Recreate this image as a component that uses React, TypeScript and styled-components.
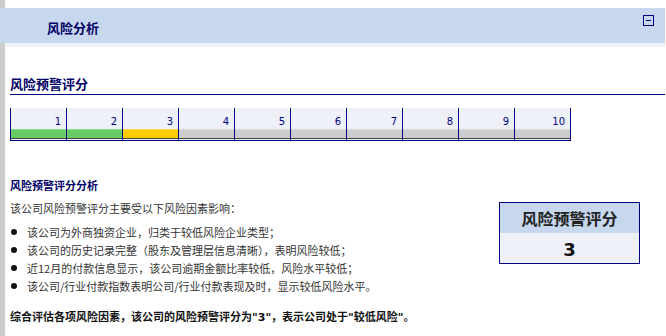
import React from 'react';
import styled, { createGlobalStyle } from 'styled-components';

const GlobalStyle = createGlobalStyle`
  body {
    margin: 0;
    background: linear-gradient(to right, #cccccc 0, #cccccc 5px, #ffffff 5px);
    font-family: "Noto Sans CJK SC", "DejaVu Sans", sans-serif;
    color: #333;
  }
`;

const Page = styled.div`
  padding-top: 8px;
  padding-bottom: 8px;
`;

const PanelHeader = styled.div`
  height: 35px;
  margin-right: 1px;
  background: #c6d7ee;
  display: flex;
  align-items: center;
  justify-content: space-between;
  padding: 0 11px 0 47px;
`;

const PanelTitle = styled.h2`
  margin: 0;
  font-size: 13px;
  font-weight: bold;
  color: #000066;
  padding-top: 4px;
`;

const CollapseButton = styled.button`
  align-self: flex-start;
  margin-top: 7px;
  width: 11px;
  height: 11px;
  padding: 0;
  border: 1px solid #000080;
  background: transparent;
  display: flex;
  align-items: center;
  justify-content: center;
  cursor: pointer;

  span {
    display: block;
    width: 5px;
    height: 1px;
    background: #000080;
  }
`;

const Strip = styled.div`
  height: 4px;
  margin: 0 1px 0 5px;
  background: #f1f2f5;
`;

const Body = styled.div`
  padding: 0 1px 0 10px;
`;

const SectionTitle = styled.h3`
  margin: 29px 0 0;
  font-size: 13px;
  line-height: 16px;
  font-weight: bold;
  color: #000066;
  padding-bottom: 2px;
  border-bottom: 1px solid #000080;
`;

const Scale = styled.div`
  margin-top: 13px;
  display: grid;
  grid-template-columns: repeat(10, 56px);
  width: 560px;
  border-right: 1px solid #000080;
  border-bottom: 1px solid #000080;
`;

const ScaleCell = styled.div`
  border-left: 1px solid #000080;
  background: #eef1f7;
  padding-bottom: 1px;
`;

const ScaleNumber = styled.div`
  height: 21px;
  box-sizing: border-box;
  padding: 8px 5px 0 0;
  text-align: right;
  font-family: "DejaVu Sans", sans-serif;
  font-size: 10px;
  line-height: 12px;
  color: #000080;
`;

const ScaleBar = styled.div<{ $color: string }>`
  height: 10px;
  box-sizing: border-box;
  background: ${(p) => p.$color};
  border-top: 1px solid rgba(255, 255, 255, 0.25);
  border-bottom: 1px solid #444;
`;

const AnalysisTitle = styled.h4`
  margin: 36px 0 0;
  font-size: 11px;
  line-height: 16px;
  font-weight: bold;
  color: #000066;
`;

const AnalysisRow = styled.div`
  display: flex;
  justify-content: space-between;
  align-items: flex-start;
  margin-top: 6px;
`;

const Paragraph = styled.p`
  margin: 0;
  font-size: 11px;
  line-height: 18px;
  color: #333;
`;

const FactorList = styled.ul`
  list-style: none;
  margin: 6px 0 0;
  padding: 0;

  li {
    display: flex;
    align-items: center;
    font-size: 11px;
    line-height: 18px;
    color: #333;
  }

  li::before {
    content: "";
    flex: none;
    width: 6px;
    height: 6px;
    border-radius: 50%;
    background: #111;
    margin: 0 10px 0 1px;
  }
`;

const ScoreBox = styled.div`
  margin: 3px 25px 0 0;
  width: 139px;
  border: 1px solid #000080;
  text-align: center;
`;

const ScoreHead = styled.div`
  height: 30px;
  background: #c6d7ee;
  font-size: 16px;
  font-weight: bold;
  line-height: 30px;
  color: #222;
`;

const ScoreValue = styled.div`
  height: 30px;
  background: #eef1f7;
  font-family: "DejaVu Sans", sans-serif;
  font-size: 18px;
  font-weight: bold;
  line-height: 34px;
  color: #111;
`;

const Conclusion = styled.p`
  margin: 14px 0 0;
  font-family: "DejaVu Sans", "Noto Sans CJK SC", sans-serif;
  font-size: 11px;
  line-height: 18px;
  font-weight: bold;
  color: #111;
`;

const levels = [1, 2, 3, 4, 5, 6, 7, 8, 9, 10];
const score = 3;

const barColor = (n: number) => {
  if (n > score) return '#cccccc';
  if (n === score) return '#ffcc00';
  return '#66cc66';
};

const factors = [
  '该公司为外商独资企业，归类于较低风险企业类型；',
  '该公司的历史记录完整（股东及管理层信息清晰），表明风险较低；',
  '近12月的付款信息显示，该公司逾期金额比率较低，风险水平较低；',
  '该公司/行业付款指数表明公司/行业付款表现及时，显示较低风险水平。',
];

const App: React.FC = () => {
  return (
    <Page lang="zh-CN">
      <GlobalStyle />
      <PanelHeader>
        <PanelTitle>风险分析</PanelTitle>
        <CollapseButton aria-label="collapse">
          <span />
        </CollapseButton>
      </PanelHeader>
      <Strip />
      <Body>
        <SectionTitle>风险预警评分</SectionTitle>
        <Scale>
          {levels.map((n) => (
            <ScaleCell key={n}>
              <ScaleNumber>{n}</ScaleNumber>
              <ScaleBar $color={barColor(n)} />
            </ScaleCell>
          ))}
        </Scale>

        <AnalysisTitle>风险预警评分分析</AnalysisTitle>
        <AnalysisRow>
          <div>
            <Paragraph>该公司风险预警评分主要受以下风险因素影响：</Paragraph>
            <FactorList>
              {factors.map((f) => (
                <li key={f}>{f}</li>
              ))}
            </FactorList>
          </div>
          <ScoreBox>
            <ScoreHead>风险预警评分</ScoreHead>
            <ScoreValue>{score}</ScoreValue>
          </ScoreBox>
        </AnalysisRow>
        <Conclusion>
          综合评估各项风险因素，该公司的风险预警评分为"3"，表示公司处于"较低风险"。
        </Conclusion>
      </Body>
    </Page>
  );
};

export default App;
